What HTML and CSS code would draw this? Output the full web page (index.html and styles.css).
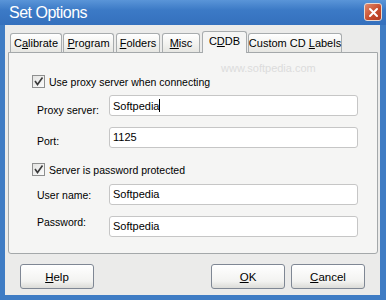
FILE: index.html
```html
<!DOCTYPE html>
<html lang="en">
<head>
    <meta charset="UTF-8">
    <title>Set Options</title>
    <link rel="stylesheet" href="styles.css">
</head>
<body>
    <div class="window">
        <div class="titlebar">
            <span class="title">Set Options</span>
            <span class="close-btn">
                <svg width="11" height="11" viewBox="0 0 11 11"><path d="M2 2 L9 9 M9 2 L2 9" stroke="#fff" stroke-width="2" stroke-linecap="round"/></svg>
            </span>
        </div>
        <div class="client">
            <div class="tabs">
                <div class="tab tab-calibrate"><span>C<u>a</u>librate</span></div>
                <div class="tab tab-program"><span><u>P</u>rogram</span></div>
                <div class="tab tab-folders"><span><u>F</u>olders</span></div>
                <div class="tab tab-misc"><span><u>M</u>isc</span></div>
                <div class="tab tab-cddb active"><span>C<u>D</u>DB</span></div>
                <div class="tab tab-custom"><span>Custom CD <u>L</u>abels</span></div>
            </div>
            <div class="panel">
                <span class="watermark">www.softpedia.com</span>
                <div class="check-row check-proxy">
                    <span class="checkbox">
                        <svg width="13" height="13" viewBox="0 0 13 13"><path d="M3 6 L5.5 9.5 L10.5 2.5" fill="none" stroke="#3a3a3a" stroke-width="1.6"/></svg>
                    </span>
                    <span>Use proxy server when connecting</span>
                </div>
                <div class="field-row row-proxy">
                    <label class="field-label">Proxy server:</label>
                    <div class="text-box">Softpedia<span class="caret"></span></div>
                </div>
                <div class="field-row row-port">
                    <label class="field-label">Port:</label>
                    <div class="text-box">1125</div>
                </div>
                <div class="check-row check-pass">
                    <span class="checkbox">
                        <svg width="13" height="13" viewBox="0 0 13 13"><path d="M3 6 L5.5 9.5 L10.5 2.5" fill="none" stroke="#3a3a3a" stroke-width="1.6"/></svg>
                    </span>
                    <span>Server is password protected</span>
                </div>
                <div class="field-row row-user">
                    <label class="field-label">User name:</label>
                    <div class="text-box">Softpedia</div>
                </div>
                <div class="field-row row-password">
                    <label class="field-label">Password:</label>
                    <div class="text-box">Softpedia</div>
                </div>
            </div>
            <div class="button-row">
                <button class="dlg-button"><u>H</u>elp</button>
                <div class="button-group">
                    <button class="dlg-button"><u>O</u>K</button>
                    <button class="dlg-button"><u>C</u>ancel</button>
                </div>
            </div>
        </div>
    </div>
</body>
</html>
```

FILE: styles.css
```css
body {
    margin: 0;
    font-family: "Liberation Sans", Arial, sans-serif;
    font-size: 10.5px;
    color: #000;
}
.window {
    width: 386px;
    height: 300px;
    box-sizing: border-box;
    background: #3f7cc4;
    display: flex;
    flex-direction: column;
    padding: 0 6px 5px 5px;
}
.titlebar {
    height: 25px;
    margin: 0 -6px 0 -5px;
    padding: 0 4px 0 9px;
    background: linear-gradient(#5a95d8, #3c7ac6 40%, #3470bd);
    display: flex;
    align-items: center;
    justify-content: space-between;
}
.title {
    color: #fff;
    font-size: 16px;
    letter-spacing: -0.5px;
    padding-top: 1px;
}
.close-btn {
    width: 16px;
    height: 16px;
    border: 1px solid #e8d8d0;
    border-radius: 3px;
    background: linear-gradient(135deg, #e48a6c, #c4492a 60%, #b13a22);
    display: flex;
    align-items: center;
    justify-content: center;
    margin-top: -1px;
}
.client {
    flex: 1;
    background: #ebebea;
    padding: 6px 2px 0 3px;
    display: flex;
    flex-direction: column;
}
.tabs {
    height: 21px;
    display: flex;
    align-items: flex-end;
    padding-left: 2px;
}
.tab {
    height: 19px;
    box-sizing: border-box;
    border: 1px solid #a8acae;
    border-bottom: none;
    border-radius: 3px 3px 0 0;
    background: linear-gradient(#ffffff, #f1f1ee 60%, #e6e6e2);
    display: flex;
    align-items: center;
    justify-content: center;
    margin-right: 1px;
    font-size: 11px;
    white-space: nowrap;
    position: relative;
    z-index: 1;
}
.tab-calibrate { width: 52px; }
.tab-program { width: 51px; }
.tab-folders { width: 44px; margin-left: 1px; }
.tab-misc { width: 38px; margin-left: 1px; margin-right: 2px; }
.tab-cddb { width: 45px; }
.tab-custom { width: 94px; }
.tab.active {
    height: 22px;
    margin-bottom: -1px;
    background: #f5f5f4;
    padding-bottom: 3px;
}
.panel {
    position: relative;
    height: 202px;
    border: 1px solid #a4a8aa;
    border-radius: 0 0 3px 3px;
    background: #f5f5f4;
    padding: 22px 0 0 23px;
    box-sizing: border-box;
}
.watermark {
    position: absolute;
    left: 212px;
    top: 9px;
    font-size: 11px;
    color: #dcdcdc;
}
.check-row {
    display: flex;
    align-items: center;
    gap: 4px;
    height: 13px;
}
.checkbox {
    width: 13px;
    height: 13px;
    box-sizing: border-box;
    border: 1px solid #8e8f8f;
    background: linear-gradient(135deg, #e4e4e2, #fbfbfb);
    display: flex;
}
.checkbox svg {
    margin: -1px;
}
.field-row {
    display: flex;
    height: 21px;
    padding-left: 5px;
}
.field-label {
    width: 72px;
    padding-top: 9px;
}
.text-box {
    width: 249px;
    box-sizing: border-box;
    border: 1px solid #c6c6c6;
    border-radius: 3px;
    background: #fff;
    padding: 3px 0 0 3px;
    font-size: 11px;
}
.caret {
    display: inline-block;
    width: 1px;
    height: 13px;
    background: #000;
    vertical-align: -2px;
}
.row-proxy { margin-top: 7px; }
.row-port { margin-top: 11px; }
.row-port .field-label { padding-top: 8px; }
.check-pass { margin-top: 15px; }
.row-user { margin-top: 8px; }
.row-user .field-label { padding-top: 5px; }
.row-password { margin-top: 11px; }
.row-password .field-label { padding-top: 0; }
.button-row {
    display: flex;
    justify-content: space-between;
    padding: 10px 13px 0 12px;
}
.button-group {
    display: flex;
    gap: 6px;
}
.dlg-button {
    width: 74px;
    height: 25px;
    border: 1px solid #7f8794;
    border-radius: 3px;
    background: linear-gradient(#ffffff, #f3f3f1 70%, #dcdcd8);
    font-family: "Liberation Sans", Arial, sans-serif;
    font-size: 11.5px;
    color: #000;
    padding: 0;
}
```
